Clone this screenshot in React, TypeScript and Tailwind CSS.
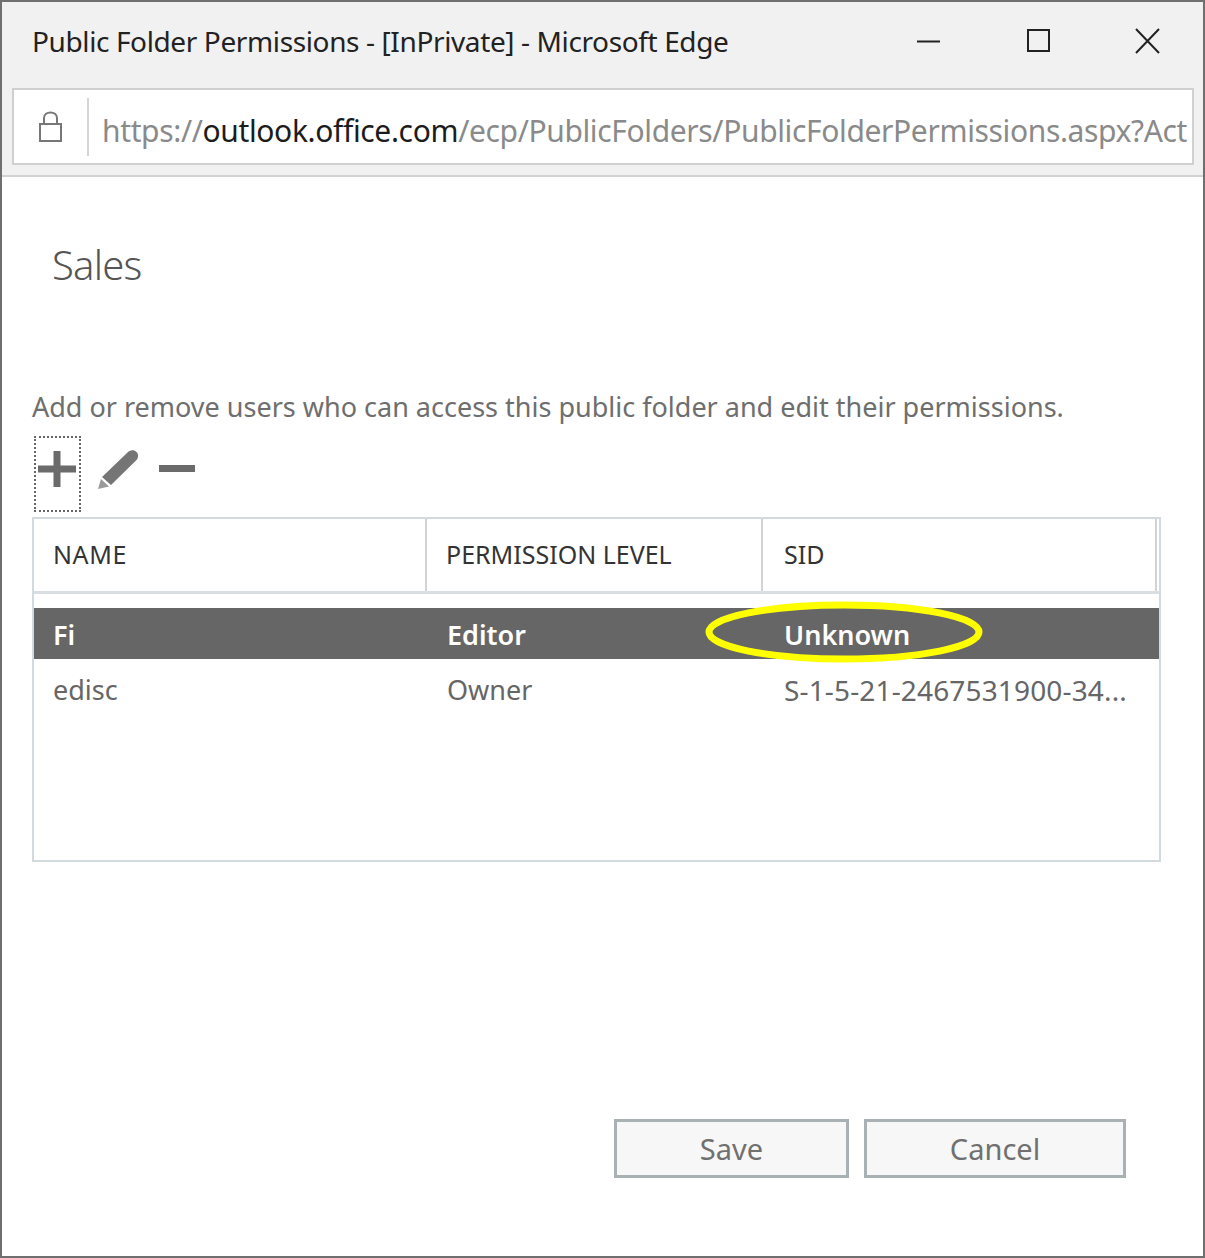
const font = { fontFamily: '"Noto Sans", "Open Sans", sans-serif' };

function WindowControls() {
  return (
    <div className="flex items-center gap-[83px] pr-[33px]">
      <svg width="24" height="24" viewBox="0 0 24 24" className="text-[#222]">
        <path d="M0 12.5 H23" stroke="currentColor" strokeWidth="2" />
      </svg>
      <svg width="26" height="26" viewBox="0 0 26 26" className="ml-[2px]">
        <rect x="2" y="2" width="21" height="21" fill="none" stroke="#222" strokeWidth="2" />
      </svg>
      <svg width="26" height="26" viewBox="0 0 26 26">
        <path d="M1 1 L24 25 M24 1 L1 25" stroke="#222" strokeWidth="2" fill="none" />
      </svg>
    </div>
  );
}

function LockIcon() {
  return (
    <svg width="26" height="34" viewBox="0 0 26 34">
      <rect x="2" y="14" width="21" height="17" fill="none" stroke="#777" strokeWidth="2" />
      <path d="M6 14 V8 C6 0.5 19 0.5 19 8 V14" fill="none" stroke="#777" strokeWidth="2" />
    </svg>
  );
}

function Toolbar() {
  return (
    <div className="mt-[10px] flex h-[76px] items-start pl-[2px]">
      <div className="flex h-[76px] w-[47px] items-start justify-center border-2 border-dotted border-[#666] pt-[12px]">
        <svg width="38" height="38" viewBox="0 0 38 38" className="-ml-[1px]">
          <path d="M19 1 V37 M0 19 H38" stroke="#6b6b6b" strokeWidth="7" fill="none" />
        </svg>
      </div>
      <svg width="42" height="42" viewBox="0 0 42 42" className="ml-[16px] mt-[12px]">
        <path d="M30 5 C33 1.500 37 1.500 39.500 4 C42 6.500 41.500 10.500 38.500 13 L14 37 L5 29 Z" fill="#757575" />
        <path d="M4 31 L12 38.500 L1 41 Z" fill="#9a9a9a" />
      </svg>
      <svg width="36" height="10" viewBox="0 0 36 10" className="ml-[20px] mt-[28px]">
        <rect x="0" y="1" width="36" height="7" fill="#6b6b6b" />
      </svg>
    </div>
  );
}

function PermissionsTable() {
  return (
    <div className="mt-[5px] h-[345px] w-[1129px] border-2 border-[#d3dade]">
      <div className="flex h-[75px] items-center border-b-[3px] border-[#d8dee2] pr-[2px] text-[25px] text-[#333]">
        <div className="flex h-full w-[393px] items-center border-r-2 border-[#cfd3d6] pl-[19px] tracking-[0.6px]">NAME</div>
        <div className="flex h-full w-[336px] items-center border-r-2 border-[#cfd3d6] pl-[19px]">PERMISSION LEVEL</div>
        <div className="flex h-full flex-1 items-center border-r-2 border-[#cfd3d6] pl-[21px]">SID</div>
      </div>
      <div className="mt-[14px] flex h-[51px] items-center bg-[#666666] pt-[4px] text-[27px] font-semibold text-white">
        <div className="w-[393px] pl-[19px]">Fi</div>
        <div className="w-[336px] pl-[20px]">Editor</div>
        <div className="pl-[21px]">Unknown</div>
      </div>
      <div className="flex h-[58px] items-center pt-[4px] text-[27px] text-[#666]">
        <div className="w-[393px] pl-[19px]">edisc</div>
        <div className="w-[336px] pl-[20px]">Owner</div>
        <div className="pl-[21px] text-[28px] tracking-[0.15px]">S-1-5-21-2467531900-34...</div>
      </div>
    </div>
  );
}

export default function App() {
  return (
    <div className="relative h-[1258px] w-[1205px] overflow-hidden border-2 border-[#6f6f6f] bg-white" style={font}>
      <div className="h-[175px] border-b-2 border-[#d2d2d2] bg-[#f1f1f1] pl-[10px] pr-[9px]">
        <div className="flex h-[86px] items-center justify-between pb-[8px]">
          <span className="pl-[20px] text-[28px] leading-none tracking-[-0.38px] text-[#222]">
            Public Folder Permissions - [InPrivate] - Microsoft Edge
          </span>
          <WindowControls />
        </div>
        <div className="flex h-[77px] items-center overflow-hidden border-2 border-[#d0d0d0] bg-white">
          <div className="flex h-[58px] w-[75px] shrink-0 items-center justify-center border-r-2 border-[#d5d5d5]">
            <LockIcon />
          </div>
          <div className="whitespace-nowrap pl-[13px] pt-[7px] text-[30px] tracking-[-0.36px] text-[#8a8a8a]">
            https://<span className="text-[#1c1c1c]">outlook.office.com</span>/ecp/PublicFolders/PublicFolderPermissions.aspx?Act
          </div>
        </div>
      </div>

      <div className="px-[30px]">
        <h1 className="pl-[20px] pt-[60px] text-[40px] font-light leading-[56px] tracking-[-0.8px] text-[#555]">Sales</h1>
        <p className="mt-[94px] text-[27px] leading-[40px] text-[#6e6e6e]">
          Add or remove users who can access this public folder and edit their permissions.
        </p>
        <div className="-mt-[1px]">
          <Toolbar />
        </div>
        <PermissionsTable />
        <div className="mt-[257px] flex w-[1094px] justify-end gap-[15px]">
          <button className="h-[59px] w-[235px] border-[3px] border-[#aab1b4] bg-[#f7f7f7] text-[29px] text-[#707070]">Save</button>
          <button className="h-[59px] w-[262px] border-[3px] border-[#aab1b4] bg-[#f7f7f7] text-[29px] text-[#707070]">Cancel</button>
        </div>
      </div>

      <svg width="280" height="62" viewBox="0 0 280 62" className="absolute left-[703px] top-[599px]">
        <ellipse cx="139" cy="31" rx="135" ry="27" fill="none" stroke="#ffff00" strokeWidth="7" />
      </svg>
    </div>
  );
}
